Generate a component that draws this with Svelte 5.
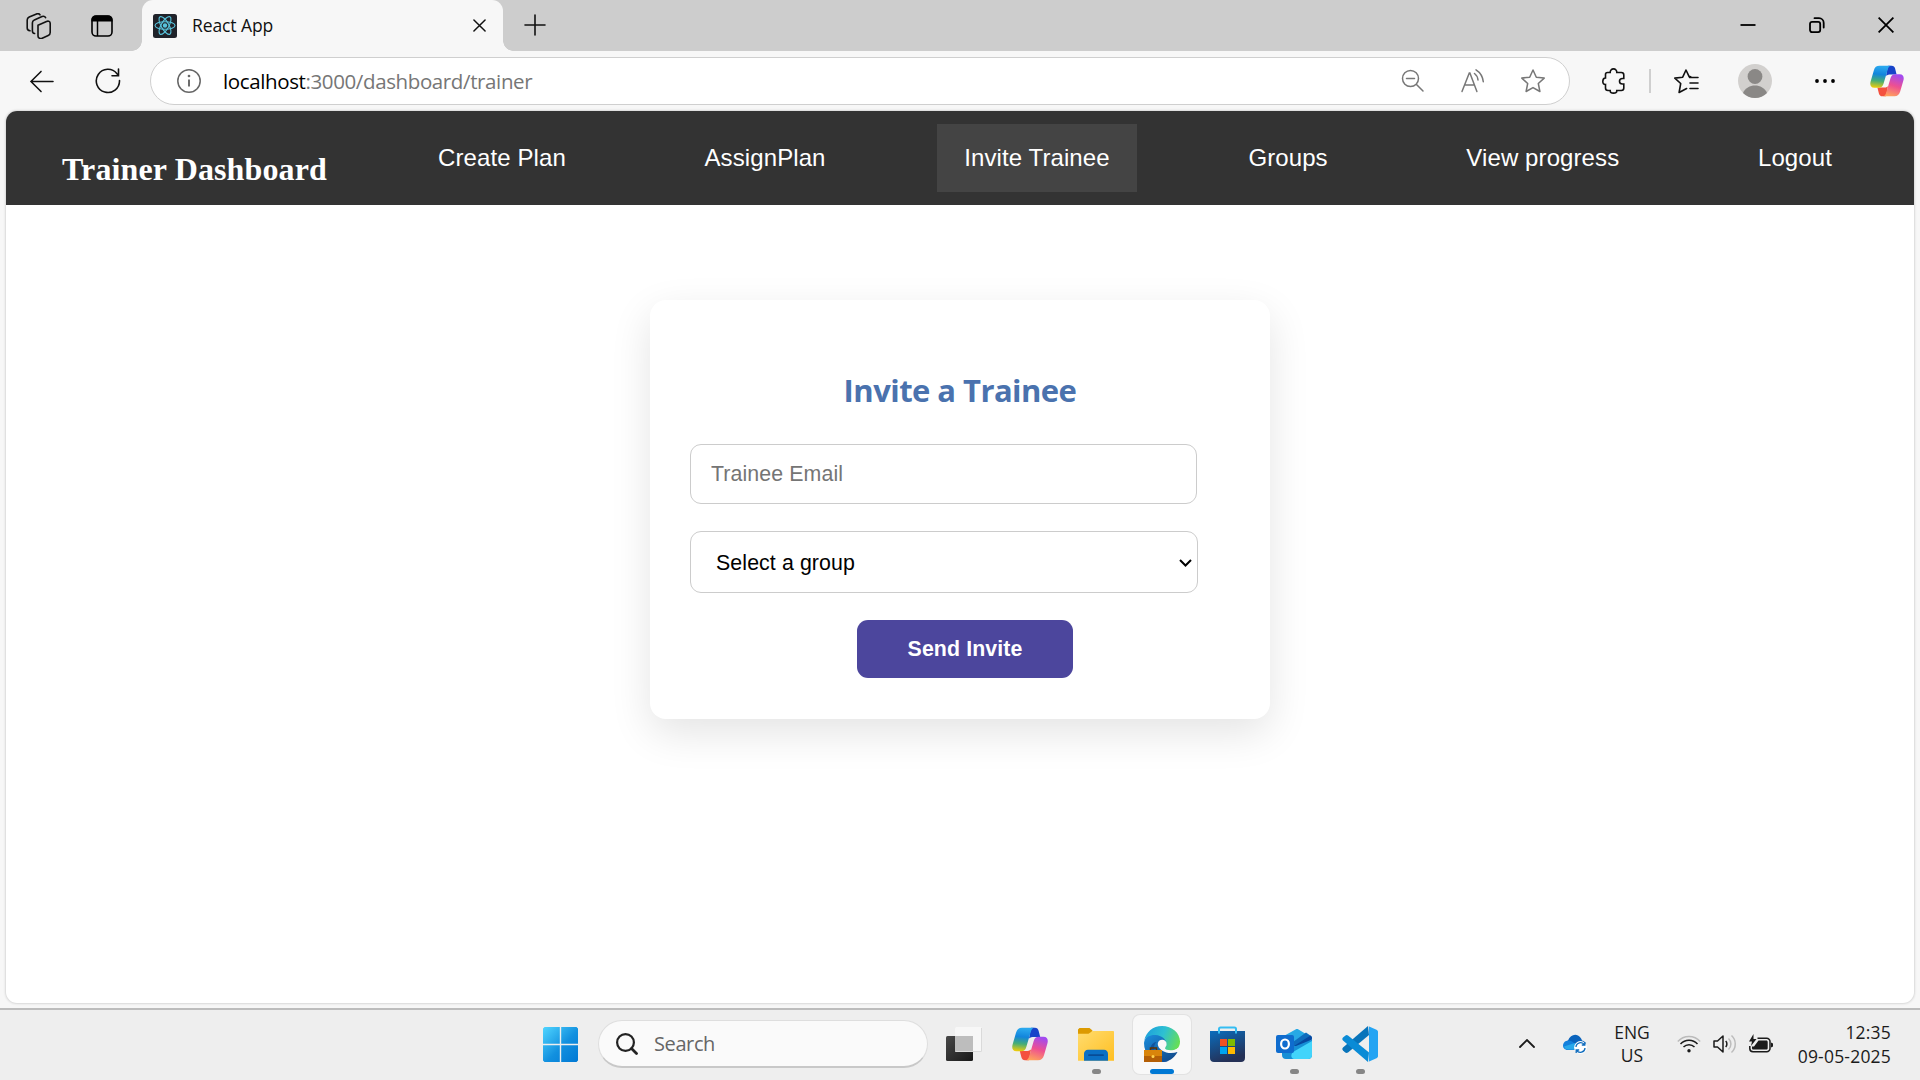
<script>
  const links = ['Create Plan', 'AssignPlan', 'Invite Trainee', 'Groups', 'View progress', 'Logout'];
  let active = $state('Invite Trainee');
</script>

{#snippet copilot(id)}
  <svg class="copilot" viewBox="0 0 36 34">
    <defs>
      <linearGradient id={id + 'a'} x1=".1" y1="0" x2="0" y2="1">
        <stop offset="0" stop-color="#2aa8ee" /><stop offset=".35" stop-color="#1285dc" />
        <stop offset=".65" stop-color="#45ad78" /><stop offset="1" stop-color="#ffd000" />
      </linearGradient>
      <linearGradient id={id + 'b'} x1=".6" y1="0" x2=".3" y2="1">
        <stop offset="0" stop-color="#a24af0" /><stop offset=".5" stop-color="#ee5091" />
        <stop offset="1" stop-color="#ffa35c" />
      </linearGradient>
    </defs>
    <path fill="#1743c9" d="M19 .8h4c2 0 3 1 3.600 3L28.200 10H22c-2 0-3.500.3-5 1.500z" />
    <path fill="#f4513f" d="M17 33.200h-4c-2 0-3-1-3.600-3L7.800 24H14c2 0 3.500-.3 5-1.500z" />
    <path fill="url(#{id}a)" d="M10 .8H22.500c-2 0-3 1.600-3.800 4.200L14.300 20c-.9 3-2.300 4.200-5 4.200H4.500C.5 24.200-.4 21 .6 17.500L4 5.800C5 2.300 6.800.8 10 .8z" />
    <path fill="url(#{id}b)" d="M26 33.200H13.500c2 0 3-1.600 3.800-4.200L21.700 14c.9-3 2.300-4.200 5-4.200h4.800c4 0 4.900 3.200 3.900 6.700L32 28.200c-1 3.500-2.800 5-6 5z" />
  </svg>
{/snippet}

<div class="screen">
  <div class="tabs">
    <svg class="workspaces line" viewBox="0 0 26 26">
      <path d="M12 12.200 20.500 8.400c2-.8 3.700 0 3.700 2v9c0 1.600-.7 2.500-2 3.100l-6.500 3c-1.700.6-3.700-.6-3.700-2.500z" />
      <path d="M8.600 20.500c-1.600-.3-2.200-1-2.200-2.500V9.800c0-1.400.7-2.200 2-2.900L16 3.600c1.700-.7 2.900-.2 3.600 1.100" />
      <path d="M4 17.800c-1.800-.2-2.800-1-2.800-2.700V7c0-1.500.7-2.300 2-2.900L10.500.9c1.600-.6 2.800-.2 3.500 1" />
    </svg>
    <svg class="vertical" viewBox="0 0 22 22">
      <rect x="1" y="1" width="20" height="20" rx="4" fill="none" stroke="#000" stroke-width="1.600" />
      <path d="M.5 6.500V5A4.500 4.500 0 0 1 5 .5h12A4.500 4.500 0 0 1 21.500 5v1.500z" /><path d="M6.500 6v15" stroke="#000" stroke-width="1.500" />
    </svg>
    <div class="tab">
      <svg class="favicon" viewBox="0 0 24 24">
        <rect width="24" height="24" rx="2.500" fill="#20232a" />
        <g fill="none" stroke="#58c4dc" stroke-width="1.100"><ellipse cx="12" cy="11.500" rx="10" ry="3.800" /><ellipse cx="12" cy="11.500" rx="10" ry="3.800" transform="rotate(60 12 11.500)" /><ellipse cx="12" cy="11.500" rx="10" ry="3.800" transform="rotate(120 12 11.500)" /></g>
        <circle cx="12" cy="11.500" r="2.200" fill="#58c4dc" />
      </svg>
      <span class="tab-title">React App</span>
      <svg class="tab-close line" viewBox="0 0 14 14"><path d="m1 1 12 12M13 1 1 13" /></svg>
    </div>
    <svg class="plus line" viewBox="0 0 22 22"><path d="M11 1v20M1 11h20" /></svg>
    <div class="window-buttons">
      <svg viewBox="0 0 16 16"><path d="M.5 8h15" stroke="#000" stroke-width="1.800" /></svg>
      <svg viewBox="0 0 16 16" fill="none" stroke="#000" stroke-width="1.800"><rect x="1" y="4.900" width="10.200" height="10.200" rx="2" /><path d="M5.500 1.200H10a4.700 4.700 0 0 1 4.700 4.700v4.600" stroke-linecap="round" /></svg>
      <svg viewBox="0 0 16 16"><path d="m.6.6 14.800 14.800M15.400.6.600 15.400" stroke="#000" stroke-width="1.800" /></svg>
    </div>
  </div>

  <div class="toolbar">
    <svg class="back line" viewBox="0 0 26 24"><path d="M24.500 12H1.500M12 1.500 1.500 12 12 22.500" /></svg>
    <svg class="reload line" viewBox="0 0 26 26"><path d="M24.500 12.500A11.600 11.600 0 1 1 22 5.700L23.500 7.500M23.500 1v6.700h-6.500" /></svg>
    <div class="address">
      <svg class="info" viewBox="0 0 24 24" fill="none" stroke="#666" stroke-width="1.500"><circle cx="12" cy="12" r="11.200" /><path d="M12 10.500v7" stroke-width="1.900" /><circle cx="12" cy="7" r=".6" /></svg>
      <span class="url">localhost<span>:3000/dashboard/trainer</span></span>
      <div class="address-icons">
        <svg viewBox="0 0 24 24"><circle cx="9.500" cy="9.500" r="8" /><path d="m15.500 15.500 6.500 6.500M5.500 9.500h8" /></svg>
        <svg viewBox="0 0 24 24"><path d="m1 22.500 7.300-18.500h.6l7 18.500M3.800 16h9.600M13.500 4.500c2 1.500 3.200 3.500 3.500 6.500M15 .8c4 2.500 6.800 6.500 7.300 12" /></svg>
        <svg viewBox="0 0 24 24"><path d="m12 1 3.300 7.200 7.900.9-5.900 5.400 1.600 8L12 18.600l-6.900 3.900 1.600-8L.8 9.100l7.900-.9z" stroke-linejoin="round" /></svg>
      </div>
    </div>
    <svg class="puzzle line" viewBox="0 0 24 26"><path d="M5.500 4.500h2.700C8 2.500 9.500.9 11.500.9S15 2.500 14.800 4.500h4.500c1.500 0 2.500 1 2.500 2.500v3.500h-1.300c-4 0-4 5.500 0 5.500h1.300v4c0 1.500-1 2.500-2.500 2.500h-4.500c.2 2-1.300 2.600-3.300 2.600s-3.500-.6-3.300-2.600H6c-1.500 0-2.500-1-2.500-2.500v-3.500C1.700 16.700.8 15.300.8 13.500S1.700 10 3.500 10V6.500c0-1.200.8-2 2-2z" /></svg>
    <i class="divider"></i>
    <svg class="favourites line" viewBox="0 0 25 25"><path d="M16.700 7.700 15 7.400 12 1 8.700 8.200.8 9.100l5.900 5.400-1.600 9 7.500-4M15.500 8.500H24M16 14h8M16 19.500h8" stroke-linejoin="round" /></svg>
    <svg class="avatar" viewBox="0 0 34 34"><circle cx="17" cy="17" r="17" fill="#d2d0ce" /><circle cx="17" cy="12.500" r="7.400" fill="#8a8886" /><path d="M5 29C7 24 12 21.500 17 21.500S27 24 29 29a17 17 0 0 1-24 0z" fill="#8a8886" /></svg>
    <svg class="dots" viewBox="0 0 20 4"><circle cx="2" cy="2" r="1.900" /><circle cx="10" cy="2" r="1.900" /><circle cx="18" cy="2" r="1.900" /></svg>
    {@render copilot('top')}
  </div>

  <main>
    <header>
      <h1>Trainer Dashboard</h1>
      <nav>
        {#each links as link}
          <button class:active={active === link} onclick={() => (active = link)}>{link}</button>
        {/each}
      </nav>
    </header>
    <form class="card" onsubmit={(e) => e.preventDefault()}>
      <h2>Invite a Trainee</h2>
      <input type="email" placeholder="Trainee Email" />
      <div class="select">
        <select aria-label="Group"><option>Select a group</option></select>
        <svg viewBox="0 0 13 8"><path d="m1 1 5.500 5.500L12 1" fill="none" stroke="#000" stroke-width="2" /></svg>
      </div>
      <button class="send">Send Invite</button>
    </form>
  </main>

  <footer>
    <svg class="start" viewBox="0 0 35 35">
      <defs><linearGradient id="win" x1="0" y1="0" x2="1" y2="1"><stop stop-color="#50d5ff" /><stop offset=".55" stop-color="#1290df" /><stop offset="1" stop-color="#0078d4" /></linearGradient></defs>
      <path fill="url(#win)" d="M1.500 0H16.800V16.800H0V1.500zM18.200 0H33.500L35 1.500V16.800H18.200zM0 18.200H16.800V35H1.500L0 33.500zM18.200 18.200H35V33.500L33.500 35H18.200z" />
    </svg>
    <div class="search">
      <svg viewBox="0 0 22 22" fill="none" stroke="#222" stroke-width="2.200"><circle cx="9.500" cy="9.500" r="8.400" /><path d="m15.500 15.500 5 5" stroke-width="2.800" stroke-linecap="round" /></svg>
      <span>Search</span>
    </div>
    <div class="apps">
      <div class="app">
        <svg viewBox="0 0 36 36">
          <defs><linearGradient id="tv" x1="0" y1="0" x2="1" y2="1"><stop stop-color="#484848" /><stop offset="1" stop-color="#181818" /></linearGradient></defs>
          <rect y="10" width="27" height="25" rx="1.500" fill="url(#tv)" /><rect x="9" y="1" width="27" height="25" rx="1.500" fill="#f7f7f7" /><path d="M9 10h18v16H9z" fill="#bdbdbd" /><path d="M10 25.500h25.500V2" fill="none" stroke="#dadada" />
        </svg>
      </div>
      <div class="app">{@render copilot('task')}</div>
      <div class="app open">
        <svg viewBox="0 0 36 36">
          <defs><linearGradient id="fo" x1="0" y1="0" x2="1" y2="1"><stop stop-color="#ffdc6f" /><stop offset="1" stop-color="#ffbf22" /></linearGradient></defs>
          <path d="M1.500 2h10l3 2.500L12 9H0V3.500z" fill="#dc9a00" /><path d="M0 7.800h10.500L14.500 5H35c.6 0 1 .4 1 1v28.700H0z" fill="url(#fo)" /><path d="M6 34.700V28c0-2.500 1.500-4.200 4-4.200h16c2.500 0 4 1.700 4 4.200v6.700z" fill="#0b70c4" /><path d="M11 29.200h14" stroke="#084c96" stroke-width="1.800" stroke-linecap="round" />
        </svg>
      </div>
      <div class="app current">
        <svg viewBox="0 0 36 36">
          <defs>
            <linearGradient id="eg" x1="0" y1=".3" x2="1" y2=".6"><stop stop-color="#1da0dc" /><stop offset=".5" stop-color="#2ec0d2" /><stop offset="1" stop-color="#67df54" /></linearGradient>
            <linearGradient id="eb" x1="0" y1="0" x2=".8" y2="1"><stop stop-color="#1b8fe0" /><stop offset="1" stop-color="#114a8b" /></linearGradient>
          </defs>
          <path fill="url(#eb)" d="M0 17C1 10 7 7 13 8c6 .5 10 5 10 10l-3 5c4 3.500 9 4 13.500 3C30 32.500 24.500 36 18 36 8 36 0 28 0 17z" />
          <path fill="#12539c" d="M12.500 16c-4 4-2.500 10 1 13.500 3 2.800 8 4 11.500 5.200-7 3-14 .3-17-6.200C5 22 7 17 12.500 16z" />
          <path fill="url(#eg)" d="M.2 14.500C2 6 9 0 18 0c10 0 18 7 18 15.500 0 6-4 9.500-9 9.500-4 0-6.500-1-6.500-2.300 0-1.200 1.800-1.700 1.800-4.700 0-5-5-8.500-10.500-9C6.500 8.500 2 11 .2 14.500z" />
          <path fill="#f8f8f8" d="M13.800 17.500c.3-2.300 2-3.700 4.400-3.700 2.600 0 4.400 1.800 4.400 4.200 0 2.200-1.600 3-1.600 4.300 0 1 2.500 2 5.500 2 3 0 5.500-.7 7.500-2.300l.3 3.600c-3.500 1.500-8 2-12 .8-5-1.500-8.800-5-8.500-8.900z" />
          <path d="M6.500 24v-2h6v2" fill="none" stroke="#5f3200" stroke-width="1.500" /><path fill="#b45f06" d="M0 24h18v12H0z" /><path fill="#d9850b" d="M0 24h18v6H0z" /><circle cx="9" cy="30.500" r="1.500" fill="#ffd24a" />
        </svg>
      </div>
      <div class="app">
        <svg viewBox="0 0 36 36">
          <defs><linearGradient id="st" x1="0" y1="0" x2=".4" y2="1"><stop stop-color="#0a6dbd" /><stop offset="1" stop-color="#243056" /></linearGradient></defs>
          <path d="M0 5h35v27c0 2.500-1.500 4-4 4H4c-2.500 0-4-1.500-4-4z" fill="url(#st)" /><path d="M9 7.500V3c0-1 .5-1.500 1.500-1.500h14c1 0 1.500.5 1.500 1.500v4.500" fill="none" stroke="#35bdf2" stroke-width="2" /><path fill="#f25022" d="M10 13h7v7h-7z" /><path fill="#7fba00" d="M18 13h7v7h-7z" /><path fill="#00a4ef" d="M10 21h7v7h-7z" /><path fill="#ffb900" d="M18 21h7v7h-7z" />
        </svg>
      </div>
      <div class="app open">
        <svg viewBox="0 0 36 36">
          <path fill="#27a9e5" d="M6 11 19.500 3.500c1-.6 2-.6 3 0L34 10.500 19 25.500H6z" /><path fill="#0f6cbd" d="M17 16 30 6.500l5 3.500c.8.6 1 1.200 1 2L19 22.500z" /><path fill="#0748a0" d="m18 20 16.500-10.500c1.200 1 1.500 2 1.500 4L19 25z" /><path fill="#168fd6" d="M6 20h14l16-6.500V29c0 2.500-1.500 4-4 4H10c-2.500 0-4-1.500-4-4z" /><path fill="#42d4fb" d="m17 26 19-11v14c0 2.500-1.500 4-4 4H18c-2.500 0-4-4-1-7z" /><rect y="9" width="18" height="18" rx="2" fill="#0f6cce" /><ellipse cx="9" cy="18" rx="3.900" ry="4.500" fill="none" stroke="#fff" stroke-width="2.200" />
        </svg>
      </div>
      <div class="app open">
        <svg viewBox="0 0 36 36"><path fill="#0874ba" d="m1 21.500 25-21.500 1 9L6 26.500c-1 .7-2 .6-2.800 0L1 24.500c-.9-.9-.9-2 0-3z" /><path fill="#0a8bd6" d="M1 11.500 3.500 9.500c.8-.7 1.800-.7 2.500 0L27 26.500 26 36 1 14.500c-.9-.9-.9-2 0-3z" /><path fill="#24a4f3" d="m26 0 8.500 3.800c1 .5 1.500 1.200 1.500 2.200v24c0 1-.5 1.800-1.500 2.200L26 36c1-.4 1-1 1-2V2c0-1 0-1.600-1-2z" /></svg>
      </div>
    </div>
    <div class="tray">
      <svg class="chevron" viewBox="0 0 16 9"><path d="m1 8 7-7 7 7" fill="none" stroke="#1b1b1b" stroke-width="1.800" stroke-linecap="round" /></svg>
      <svg class="cloud" viewBox="0 0 25 20"><path d="M5 16a5 5 0 0 1 0-9.500C7 2 11-.5 15 1.500c2 1 3.500 3 4 5 3 .5 5 3 3.500 6.500L19 16z" fill="#0a63bc" /><path d="M5 16C-1 16-1.500 9 3 7c3-1.500 6 0 8 2l8 5-1 2z" fill="#1380dc" /><path d="M1 12.500 12 9l7 6.500H5c-2 0-3.500-1-4-3z" fill="#28a8ea" /><circle cx="17.500" cy="13.500" r="6.400" fill="#fff" /><path d="M13 13a4.600 4.600 0 0 1 8.500-2.200M22 14a4.600 4.600 0 0 1-8.500 2.200M21.800 8v3h-3M13.200 19v-3h3" fill="none" stroke="#0f6cbd" stroke-width="1.300" /></svg>
      <div class="language"><span>ENG</span><span>US</span></div>
      <svg class="wifi" viewBox="0 0 24 18" fill="none" stroke="#1b1b1b" stroke-width="1.500"><path d="M.8 6.500a15 15 0 0 1 22.400 0" stroke="#bbb" /><path d="M3.500 9a11.500 11.500 0 0 1 17 0M6.500 12a7.600 7.600 0 0 1 11 0" /><circle cx="12" cy="15.800" r="1.700" fill="#1b1b1b" stroke="none" /></svg>
      <svg class="speaker" viewBox="0 0 24 20" fill="none" stroke="#1b1b1b" stroke-width="1.500" stroke-linejoin="round"><path d="M1 7h3.500L10 2v16l-5.500-5H1z" /><path d="M12.700 7c1.600 1.600 1.600 4.400 0 6" /><path d="M15.500 4.500c3.200 3 3.200 8 0 11M18.500 1.500c5 4.500 5 12.500 0 17" stroke="#bcbcbc" /></svg>
      <svg class="battery" viewBox="0 0 24 19"><path d="M8.500 4.200h9.200A3.300 3.300 0 0 1 21 7.500v7a3.300 3.300 0 0 1-3.300 3.300H4A3.300 3.300 0 0 1 .8 14.500V12" fill="none" stroke="#1b1b1b" stroke-width="1.500" /><path d="M9.500 6.500h7.700c1 0 1.500.6 1.500 1.500v6c0 1-.6 1.500-1.500 1.500H4.500c-1 0-1.500-.5-1.500-1.500v-1.500h2zM22 8.500l2 1v3l-2 1zM4.500 0 0 7.500h3L2 12l5.500-7h-3z" fill="#1b1b1b" /></svg>
      <div class="clock"><span>12:35</span><span>09-05-2025</span></div>
    </div>
  </footer>
</div>

<style>
  :global(body) { margin: 0; }
  * { box-sizing: border-box; }
  svg { display: block; flex: none; }
  button, input, select { font-family: 'Liberation Sans', Arial, sans-serif; border: 0; margin: 0; }
  .screen { width: 1920px; height: 1080px; overflow: hidden; display: flex; flex-direction: column; background: #f7f7f7; font-family: 'Open Sans', 'Noto Sans', sans-serif; }
  .line { fill: none; stroke: #111; stroke-width: 1.6; stroke-linecap: round; }

  .tabs { height: 51px; flex: none; display: flex; align-items: center; background: #cdcdcd; padding-left: 26px; }
  .workspaces { width: 26px; height: 26px; }
  .vertical { width: 22px; height: 22px; margin-left: 39px; }
  .tab { position: relative; width: 361px; height: 51px; margin-left: 29px; padding: 0 17px 0 11px; display: flex; align-items: center; background: #f7f7f7; border-radius: 11px 11px 0 0; }
  .tab::before, .tab::after { content: ''; position: absolute; bottom: 0; width: 10px; height: 10px; }
  .tab::before { left: -10px; background: radial-gradient(circle at 0 0, #cdcdcd 9.500px, #f7f7f7 10px); }
  .tab::after { right: -10px; background: radial-gradient(circle at 100% 0, #cdcdcd 9.500px, #f7f7f7 10px); }
  .favicon { width: 24px; height: 24px; }
  .tab-title { flex: 1; margin: 0 0 1px 15px; font-size: 17.500px; letter-spacing: -.1px; white-space: nowrap; color: #111; }
  .tab-close { width: 13px; height: 13px; }
  .plus { width: 22px; height: 22px; margin: 0 0 2px 21px; }
  .window-buttons { display: flex; gap: 53px; margin-left: auto; padding: 0 26px 1px 0; }
  .window-buttons svg { width: 16px; height: 16px; }

  .toolbar { height: 60px; flex: none; display: flex; align-items: center; padding-left: 29px; }
  .back { width: 26px; height: 23px; }
  .reload { width: 26px; height: 26px; margin-left: 40px; }
  .address { width: 1420px; height: 48px; margin-left: 29px; padding: 0 24px 0 26px; display: flex; align-items: center; background: #fff; border: 1.500px solid #cfcfcf; border-radius: 24px; }
  .info { width: 24px; height: 24px; }
  .url { margin-left: 22px; font-size: 20.500px; letter-spacing: -.38px; white-space: nowrap; color: #000; }
  .url span { color: #767676; }
  .address-icons { display: flex; gap: 36px; margin-left: auto; }
  .address-icons svg { width: 24px; height: 24px; fill: none; stroke: #777; stroke-width: 1.5; stroke-linecap: round; }
  .puzzle { width: 24px; height: 26px; margin-left: 32px; }
  .divider { width: 2px; height: 24px; margin-left: 23px; background: #cfcfcf; }
  .favourites { width: 25px; height: 25px; margin-left: 23px; }
  .avatar { width: 34px; height: 34px; margin-left: 39px; }
  .dots { width: 20px; height: 4px; margin-left: 43px; }
  .copilot { width: 36px; height: 34px; }
  .toolbar .copilot { width: 34px; height: 32px; margin-left: 35px; }

  main { flex: none; width: 1908px; height: 892px; margin: 0 6px; background: #fff; border-radius: 11px; overflow: hidden; box-shadow: 0 0 2px 1px #d8d8d8; }
  header { display: flex; height: 94px; padding-left: 56px; background: #333; }
  h1 { width: 349px; margin: 39px 0 0; font: bold 32px/38px 'Liberation Serif', 'Times New Roman', serif; letter-spacing: .12px; color: #fff; white-space: nowrap; }
  nav { width: 1448px; display: flex; justify-content: space-between; align-items: flex-start; padding-top: 13px; }
  nav button { height: 68px; padding: 0 27px; background: none; color: #fff; font-size: 24px; letter-spacing: .1px; white-space: nowrap; }
  nav button.active { background: #444; }

  .card { width: 620px; height: 419px; margin: 95px auto 0; padding: 68px 40px 0; background: #fff; border-radius: 16px; box-shadow: 0 14px 42px rgba(0, 0, 0, .11); }
  h2 { margin: 0; text-align: center; font: bold 31px/44px 'Open Sans', 'Noto Sans', sans-serif; letter-spacing: -.55px; color: #4a72ae; }
  input { display: block; width: 507px; height: 60px; margin-top: 32px; padding: 0 20px; border: 1px solid #ccc; border-radius: 11px; font-size: 21.330px; letter-spacing: .1px; background: #fff; }
  input::placeholder { color: #757575; }
  .select { width: 508px; height: 62px; margin-top: 27px; padding: 2px 5px 0 25px; display: flex; align-items: center; border: 1px solid #ccc; border-radius: 11px; }
  select { flex: 1; appearance: none; padding: 0; font-size: 21.330px; letter-spacing: .1px; color: #000; background: none; }
  .select svg { width: 13px; height: 8px; }
  .send { display: block; width: 216px; height: 58px; margin: 27px 0 0 167px; border-radius: 11px; background: #4c469d; color: #fff; font-size: 21.330px; font-weight: bold; letter-spacing: .1px; }

  footer { flex: none; height: 72px; margin-top: 5px; display: flex; align-items: center; border-top: 2px solid #bcbcbc; background: #eee; padding: 0 0 2px 543px; }
  .start { width: 35px; height: 35px; }
  .search { width: 330px; height: 48px; margin-left: 20px; padding-left: 17px; display: flex; align-items: center; background: #fafafa; border: 1.500px solid #dedede; border-bottom: 2px solid #c8c8c8; border-radius: 24px; color: #666; font-size: 20px; letter-spacing: -.4px; }
  .search svg { width: 22px; height: 22px; margin-right: 16px; }
  .apps { display: flex; gap: 8px; margin-left: 7px; }
  .app { position: relative; width: 58px; height: 59px; display: flex; align-items: center; justify-content: center; border-radius: 7px; }
  .app svg { width: 36px; height: 36px; }
  .app .copilot { height: 34px; }
  .app.current { background: #f8f8f8; box-shadow: 0 0 0 1px #e2e2e2; }
  .app.open::after, .app.current::after { content: ''; position: absolute; bottom: 0; width: 9px; height: 5px; border-radius: 3px; background: #868686; }
  .app.current::after { width: 24px; background: #0078d4; }
  .tray { display: flex; align-items: center; margin-left: auto; padding: 0 29px 1px 0; color: #1b1b1b; font-size: 17.500px; line-height: 24px; }
  .chevron { width: 16px; height: 9px; }
  .cloud { width: 25px; height: 20px; margin-left: 28px; }
  .language, .clock { display: flex; flex-direction: column; white-space: nowrap; }
  .language { width: 36px; margin-left: 26px; align-items: center; line-height: 23px; }
  .wifi { width: 24px; height: 18px; margin-left: 27px; }
  .speaker { width: 24px; height: 20px; margin-left: 12px; }
  .battery { width: 24px; height: 19px; margin-left: 12px; }
  .clock { width: 94px; margin-left: 24px; align-items: flex-end; letter-spacing: .2px; }
</style>
